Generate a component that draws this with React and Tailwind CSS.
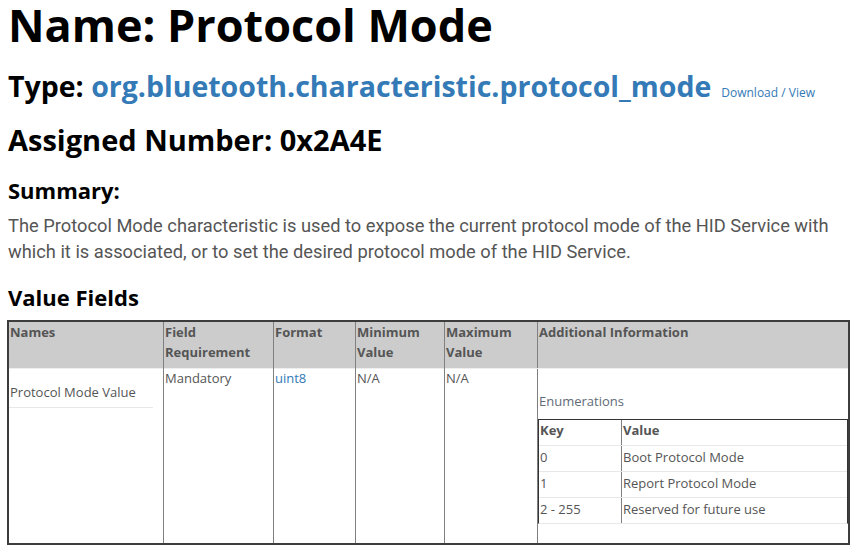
export default function App() {
  const head = 'font-[Lato,"Liberation Sans",sans-serif] font-bold text-black';
  const cell = 'text-[13px] leading-5 px-[1px]';
  const enums = [
    ['0', 'Boot Protocol Mode'],
    ['1', 'Report Protocol Mode'],
    ['2 - 255', 'Reserved for future use'],
  ];

  return (
    <div className="bg-white min-h-screen px-2 font-['Open_Sans',sans-serif] text-[#555]">
      <h1 className={`${head} text-[45px] leading-[50px]`}>Name: Protocol Mode</h1>

      <h2 className={`${head} mt-[20px] text-[28.5px] leading-8 whitespace-nowrap`}>
        Type: <a className="text-[#337ab7]">org.bluetooth.characteristic.protocol_mode</a>
        <a className="ml-[10px] font-['Open_Sans',sans-serif] text-[12px] font-normal text-[#337ab7]">Download / View</a>
      </h2>

      <h2 className={`${head} mt-[15px] text-[29px] leading-8`}>Assigned Number: 0x2A4E</h2>

      <h3 className={`${head} mt-[20px] text-[22px] leading-7`}>Summary:</h3>
      <p className="mt-[9px] w-[840px] font-[Roboto,sans-serif] text-[18.3px] leading-[26px] text-[#555]">
        The Protocol Mode characteristic is used to expose the current protocol mode of the HID Service with which it is
        associated, or to set the desired protocol mode of the HID Service.
      </p>

      <h3 className={`${head} mt-[18px] text-[22px] leading-7`}>Value Fields</h3>

      <div className="mt-[9px] -ml-[1px] w-[843px] border-2 border-[#3d3d3d]">
        <div className="grid grid-cols-[154px_110px_82px_89px_93px_1fr] bg-[#cccccc] h-[46px] font-bold">
          <div className={cell}>Names</div>
          <div className={`${cell} border-l border-[#808080]`}>Field Requirement</div>
          <div className={`${cell} border-l border-[#808080]`}>Format</div>
          <div className={`${cell} border-l border-[#808080]`}>Minimum Value</div>
          <div className={`${cell} border-l border-[#808080]`}>Maximum Value</div>
          <div className={`${cell} border-l border-[#808080]`}>Additional Information</div>
        </div>
        <div className="grid grid-cols-[154px_110px_82px_89px_93px_1fr] h-[175px] border-t border-[#eeeeee]">
          <div>
            <div className={`${cell} text-[13.5px] mr-[10px] pt-[13px] pb-[5px] border-b border-[#e8e8e8]`}>
              Protocol Mode Value
            </div>
          </div>
          <div className={`${cell} -mt-[1px] border-l border-[#808080]`}>Mandatory</div>
          <div className={`${cell} -mt-[1px] border-l border-[#808080] text-[#337ab7]`}>uint8</div>
          <div className={`${cell} -mt-[1px] border-l border-[#808080]`}>N/A</div>
          <div className={`${cell} -mt-[1px] border-l border-[#808080]`}>N/A</div>
          <div className="border-l border-[#808080]">
            <div className="pt-[22px] px-[1px] text-[13px] leading-5 text-[#5f6b77]">Enumerations</div>
            <div className="mt-[8px] border-t border-l border-r border-[#333] border-b-[#e8e8e8] border-b">
              <div className="grid grid-cols-[82px_1fr] h-[25px] font-bold">
                <div className={cell}>Key</div>
                <div className={`${cell} border-l border-[#808080]`}>Value</div>
              </div>
              {enums.map(([k, v]) => (
                <div key={k} className="grid grid-cols-[82px_1fr] h-[26px] border-t border-[#e8e8e8]">
                  <div className={`${cell} pt-[1px]`}>{k}</div>
                  <div className={`${cell} pt-[1px] border-l border-[#808080]`}>{v}</div>
                </div>
              ))}
            </div>
          </div>
        </div>
      </div>
    </div>
  );
}
